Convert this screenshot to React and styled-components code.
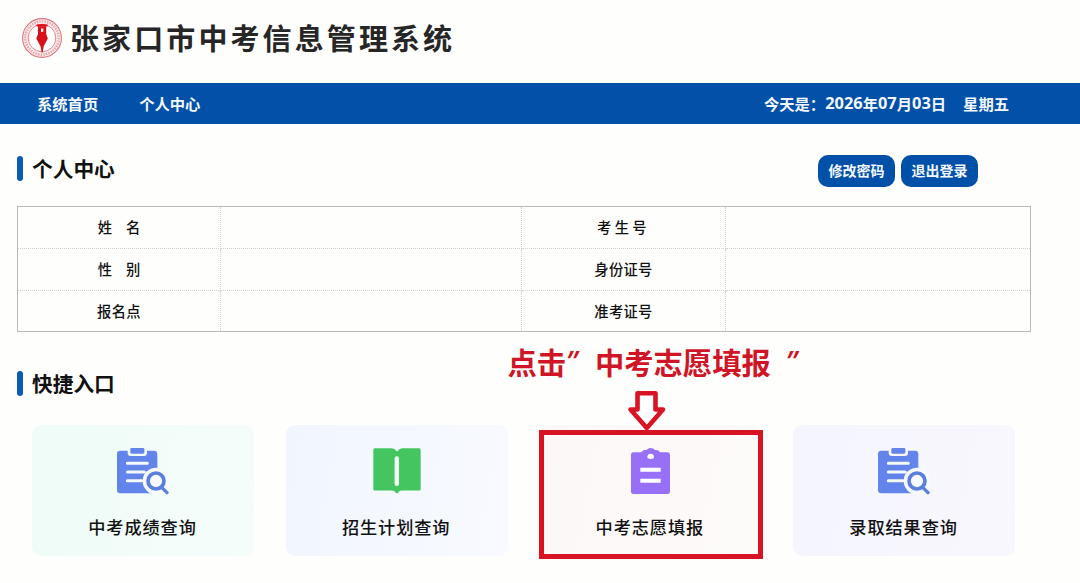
import React from "react";
import styled, { createGlobalStyle } from "styled-components";

const mainBlue = "#0250a8";
const markRed = "#d81324";

const applicantRows = [
  [{ text: "姓", text2: "名" }, { text: "考生号", spacing: "3.3px" }],
  [{ text: "性", text2: "别" }, { text: "身份证号", spacing: "0.3px" }],
  [{ text: "报名点", spacing: "0.3px" }, { text: "准考证号", spacing: "0.3px" }],
];

const shortcuts = [
  { name: "中考成绩查询", bg: "#effcf7", edge: "#f5fdfb", icon: <SearchBoardIcon /> },
  { name: "招生计划查询", bg: "#f1f6fe", edge: "#f8faff", icon: <BookIcon /> },
  { name: "中考志愿填报", bg: "#fdf8f7", edge: "#fdfafa", icon: <ClipboardIcon />, marked: true },
  { name: "录取结果查询", bg: "#f5f5fe", edge: "#f8f7fe", icon: <SearchBoardIcon /> },
];

export default function App() {
  return (
    <Page>
      <GlobalStyle />
      <Header>
        <Logo />
        <SystemName>张家口市中考信息管理系统</SystemName>
      </Header>

      <NavBar>
        <NavLink>系统首页</NavLink>
        <NavLink>个人中心</NavLink>
        <Today>
          今天是：<Num>2026</Num>年<Num>07</Num>月<Num>03</Num>日
          <Weekday>星期五</Weekday>
        </Today>
      </NavBar>

      <SectionHead>
        <SectionTitle>个人中心</SectionTitle>
        <ButtonGroup>
          <BlueButton>修改密码</BlueButton>
          <BlueButton>退出登录</BlueButton>
        </ButtonGroup>
      </SectionHead>

      <InfoTable>
        {applicantRows.map((row, i) => (
          <React.Fragment key={i}>
            {row.map((label) => (
              <React.Fragment key={label.text}>
                <InfoCell>
                  <InfoLabel spacing={label.spacing}>
                    <span>{label.text}</span>
                    {label.text2 && <span>{label.text2}</span>}
                  </InfoLabel>
                </InfoCell>
                <InfoCell />
              </React.Fragment>
            ))}
          </React.Fragment>
        ))}
      </InfoTable>

      <ShortcutHead>
        <SectionTitle>快捷入口</SectionTitle>
      </ShortcutHead>

      <ShortcutList>
        {shortcuts.map((item) => (
          <ShortcutCard key={item.name} bg={item.bg} edge={item.edge} $marked={item.marked}>
            <IconBox>{item.icon}</IconBox>
            <ShortcutName>{item.name}</ShortcutName>
            {item.marked && (
              <Callout>
                <CalloutText>
                  点击<Quote>”</Quote>
                  <Target>中考志愿填报</Target>
                  <Quote>”</Quote>
                </CalloutText>
                <DownArrow />
              </Callout>
            )}
          </ShortcutCard>
        ))}
      </ShortcutList>
    </Page>
  );
}

/*
Icon Part
*/
function Logo() {
  return (
    <svg width="42" height="42" viewBox="0 0 42 42">
      <circle cx="21" cy="21" r="19.4" fill="#fdeced" stroke="#d9777d" strokeWidth="1.1" />
      <circle cx="21" cy="21" r="16.7" fill="none" stroke="#e6a6aa" strokeWidth="2.4" strokeDasharray="1.5 1.1" />
      <circle cx="21" cy="21" r="13.8" fill="#fff" stroke="#d9777d" strokeWidth="0.9" />
      <path d="M15.300 7.800Q21 6 26.700 7.800V9.400H15.300z" fill="#d9101c" />
      <path d="M17 9.200H25.200V17L26.800 21.500L22.600 29.500L21.700 35.500H20.600L19.600 29.500L15.300 21.500L17 17z" fill="#d9101c" />
      <path d="M20 11.500H22.300V14.800H20z" fill="#fff" />
    </svg>
  );
}

function SearchBoardIcon() {
  return (
    <svg width="52" height="47" viewBox="0 0 156 141">
      <path
        d="M10 8H32V15Q32 24 41 24H81Q90 24 90 15V8H111Q121 8 121 18V136H10Q0 136 0 126V18Q0 8 10 8z"
        fill="#6384ea"
      />
      <rect x="40" y="0" width="42" height="17" rx="4" fill="#6384ea" />
      <path d="M31 46H91M31 72H82M31 98H75" stroke="#f5faff" strokeWidth="9" strokeLinecap="round" />
      <circle cx="117" cy="99" r="40" fill="#f6faff" />
      <circle cx="117" cy="99" r="24" fill="none" stroke="#5b7fdd" strokeWidth="11" />
      <path d="M134 118L150 134" stroke="#5b7fdd" strokeWidth="10" strokeLinecap="round" />
    </svg>
  );
}

function BookIcon() {
  return (
    <svg width="48" height="46" viewBox="0 0 142 136">
      <path
        d="M5 1H55Q63 1 71 10Q79 1 87 1H137Q141 1 141 6V122Q141 126 137 126H83Q77 127 74 132Q71 136 67 132Q64 127 58 126H5Q1 126 1 122V6Q1 1 5 1z"
        fill="#44c560"
      />
      <path d="M70.500 31V106" stroke="#f1fff5" strokeWidth="13" strokeLinecap="round" />
    </svg>
  );
}

function ClipboardIcon() {
  return (
    <svg width="39" height="46" viewBox="0 0 117 138">
      <path
        d="M7 13H31Q35 5 46 6Q51 0 59 0Q67 0 72 6Q83 5 87 13H110Q117 13 117 20V130Q117 138 110 138H7Q0 138 0 130V20Q0 13 7 13z"
        fill="#9870f8"
      />
      <path d="M49 28Q49 17 59 17Q69 17 69 28Q69 33 59 33Q49 33 49 28z" fill="#fff" />
      <path d="M28 65H89M28 98H89" stroke="#fff" strokeWidth="12" />
    </svg>
  );
}

function DownArrow() {
  return (
    <ArrowSvg width="42" height="44" viewBox="0 0 42 44">
      <path
        d="M11.500 4.300H29.500V20.500H37L20.800 39L4.500 20.500H11.500z"
        fill="#fff"
        stroke={markRed}
        strokeWidth="4.600"
        strokeLinejoin="round"
      />
    </ArrowSvg>
  );
}

/*
Frame Part
*/
const GlobalStyle = createGlobalStyle`
  body {
    margin: 0;
    background-color: #fefefd;
  }
`;

const Page = styled.div`
  box-sizing: border-box;
  width: 1080px;
  height: 583px;
  overflow: hidden;
  font-family: "Noto Sans CJK SC", "Liberation Sans", sans-serif;
  color: #111111;
`;

const Header = styled.header`
  box-sizing: border-box;
  height: 83px;
  display: flex;
  align-items: flex-start;
  padding: 17px 0 0 21px;
`;

const SystemName = styled.h1`
  margin: 0 0 0 7px;
  font-size: 29px;
  line-height: 41px;
  font-weight: bold;
  letter-spacing: 3.1px;
  color: #262626;
`;

const NavBar = styled.nav`
  box-sizing: border-box;
  height: 41px;
  display: flex;
  align-items: center;
  gap: 41px;
  padding: 0 71px 2px 37px;
  background-color: ${mainBlue};
  color: #f4f9ff;
  font-size: 15.3px;
  font-weight: bold;
`;

const NavLink = styled.a`
  white-space: nowrap;
`;

const Today = styled.div`
  display: flex;
  align-items: center;
  margin-left: auto;
  font-size: 15.3px;
  font-weight: bold;
  white-space: nowrap;
`;

const Num = styled.span`
  font-family: "Open Sans", sans-serif;
  font-size: 16.4px;
  line-height: 20px;
  font-weight: bold;
`;

const Weekday = styled.span`
  margin-left: 17px;
`;

/*
Section Part
*/
const SectionHead = styled.div`
  box-sizing: border-box;
  height: 82px;
  display: flex;
  align-items: flex-start;
  justify-content: space-between;
  padding: 31px 102px 0 17px;
`;

const ShortcutHead = styled(SectionHead)`
  height: 93px;
  padding-top: 38px;
`;

const SectionTitle = styled.h2`
  display: flex;
  align-items: center;
  gap: 9px;
  margin: 0;
  height: 26px;
  font-size: 20.7px;
  font-weight: bold;

  &::before {
    content: "";
    width: 6px;
    height: 25px;
    border-radius: 3px;
    background-color: #0a5db3;
  }
`;

const ButtonGroup = styled.div`
  display: flex;
  gap: 6px;
`;

const BlueButton = styled.button`
  width: 77px;
  height: 32px;
  padding: 0 0 2px;
  border: none;
  border-radius: 10px;
  background-color: ${mainBlue};
  color: #f4f9ff;
  font-family: inherit;
  font-size: 14px;
  font-weight: bold;
`;

/*
Table Part
*/
const InfoTable = styled.div`
  box-sizing: border-box;
  display: grid;
  grid-template-columns: 203px 301px 204px 1fr;
  grid-template-rows: 42px 42px 40px;
  width: 1014px;
  height: 126px;
  margin-left: 17px;
  border: 1px solid #b9bbbb;
`;

const InfoCell = styled.div`
  box-sizing: border-box;
  display: flex;
  align-items: center;
  justify-content: center;
  padding-bottom: 2px;
  border-right: 1px dotted #cfd1d1;
  border-bottom: 1px dotted #cfd1d1;

  &:nth-child(4n) {
    border-right: none;
  }

  &:nth-child(n + 9) {
    padding-bottom: 1px;
    border-bottom: none;
  }
`;

const InfoLabel = styled.span`
  display: flex;
  gap: 14px;
  font-size: 14.3px;
  font-weight: 500;
  letter-spacing: ${(props) => props.spacing || "0"};
`;

/*
Shortcut Part
*/
const ShortcutList = styled.div`
  display: grid;
  grid-template-columns: repeat(4, 222px);
  gap: 31.700px;
  margin-left: 32px;
`;

const ShortcutCard = styled.div`
  position: relative;
  box-sizing: border-box;
  height: 131px;
  display: flex;
  flex-direction: column;
  align-items: center;
  padding-top: 23px;
  border-radius: 9px;
  background: linear-gradient(100deg, ${(props) => props.bg}, ${(props) => props.edge});

  /* red frame round the entry the user has to click */
  &::after {
    content: "";
    display: ${(props) => (props.$marked ? "block" : "none")};
    position: absolute;
    inset: 5px -1.500px -3px 0;
    border: 5px solid ${markRed};
  }
`;

const IconBox = styled.div`
  height: 48px;
`;

const ShortcutName = styled.div`
  margin-top: 18px;
  margin-right: 1px;
  font-size: 17.200px;
  line-height: 26px;
  font-weight: 500;
  letter-spacing: 0.9px;
`;

const Callout = styled.div`
  position: absolute;
  left: -32px;
  top: -85px;
  width: 300px;
`;

const CalloutText = styled.div`
  display: flex;
  color: #cf1526;
  font-size: 29.3px;
  line-height: 43px;
  font-weight: bold;
  white-space: nowrap;
`;

const Quote = styled.span`
  width: 16px;
  font-family: "Noto Sans", sans-serif;
  font-style: italic;
  font-weight: 500;
`;

const Target = styled.span`
  margin: 0 15px 0 13px;
`;

const ArrowSvg = styled.svg`
  position: absolute;
  left: 119px;
  top: 49px;
`;
